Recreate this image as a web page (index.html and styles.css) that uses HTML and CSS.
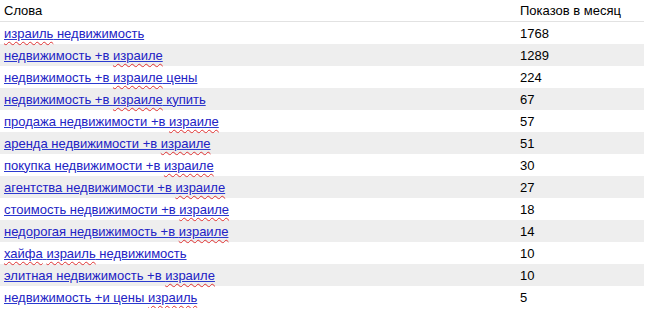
FILE: index.html
```html
<!DOCTYPE html>
<html>
<head>
<meta charset="utf-8">
<link rel="stylesheet" href="styles.css">
</head>
<body>
<table class="kw">
<thead>
<tr><th class="c1">Слова</th><th class="c2">Показов в месяц</th></tr>
</thead>
<tbody>
<tr><td><a href="#"><span class="sp">израиль</span> недвижимость</a></td><td>1768</td></tr>
<tr class="alt"><td><a href="#">недвижимость +в <span class="sp">израиле</span></a></td><td>1289</td></tr>
<tr><td><a href="#">недвижимость +в <span class="sp">израиле</span> цены</a></td><td>224</td></tr>
<tr class="alt"><td><a href="#">недвижимость +в <span class="sp">израиле</span> купить</a></td><td>67</td></tr>
<tr><td><a href="#">продажа недвижимости +в <span class="sp">израиле</span></a></td><td>57</td></tr>
<tr class="alt"><td><a href="#">аренда недвижимости +в <span class="sp">израиле</span></a></td><td>51</td></tr>
<tr><td><a href="#">покупка недвижимости +в <span class="sp">израиле</span></a></td><td>30</td></tr>
<tr class="alt"><td><a href="#">агентства недвижимости +в <span class="sp">израиле</span></a></td><td>27</td></tr>
<tr><td><a href="#">стоимость недвижимости +в <span class="sp">израиле</span></a></td><td>18</td></tr>
<tr class="alt"><td><a href="#">недорогая недвижимость +в <span class="sp">израиле</span></a></td><td>14</td></tr>
<tr><td><a href="#"><span class="sp">хайфа</span> <span class="sp">израиль</span> недвижимость</a></td><td>10</td></tr>
<tr class="alt"><td><a href="#">элитная недвижимость +в <span class="sp">израиле</span></a></td><td>10</td></tr>
<tr><td><a href="#">недвижимость +и цены <span class="sp">израиль</span></a></td><td>5</td></tr>
</tbody>
</table>
</body>
</html>
```
FILE: styles.css
```css
html, body {
  margin: 0;
  padding: 0;
  background: #fff;
}
body {
  font-family: "Liberation Sans", Arial, sans-serif;
  font-size: 13px;
  color: #000;
}
.kw {
  border-collapse: collapse;
  width: 644px;
}
.kw th {
  font-weight: normal;
  text-align: left;
  height: 21px;
  padding: 0 4px;
  border-bottom: 1px solid #e2e2e2;
  vertical-align: middle;
}
.kw td {
  height: 22px;
  padding: 0 4px;
  vertical-align: middle;
}
.kw .c2, .kw td:nth-child(2) {
  width: 120px;
}
.kw tr.alt td {
  background: #eeeeee;
}
.kw a {
  color: #2222c4;
  text-decoration: underline;
  text-decoration-color: #2a3ad0;
}
.sp {
  text-decoration: underline wavy #e03030;
  text-decoration-thickness: 1px;
  text-underline-offset: 3px;
}
```
